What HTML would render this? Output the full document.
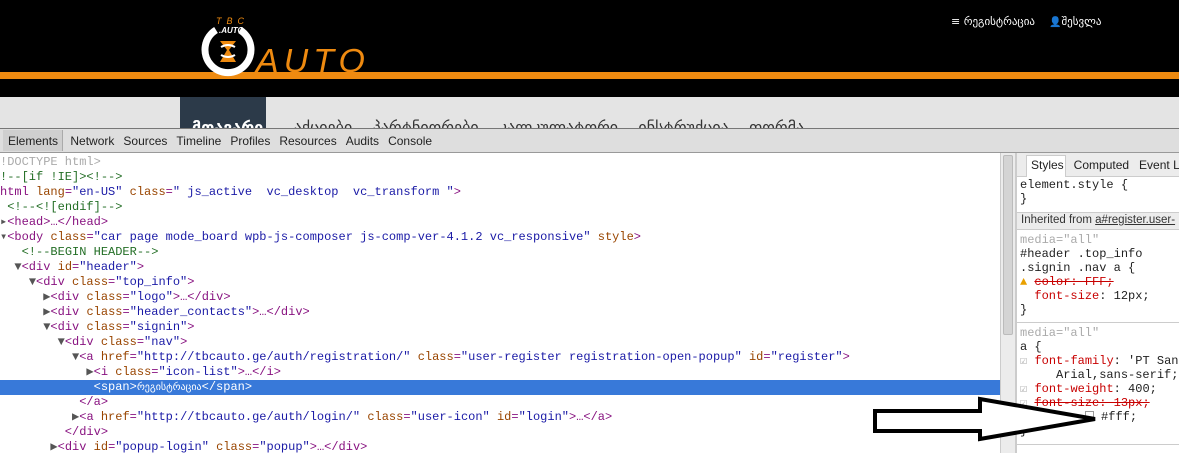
<!DOCTYPE html><html><head><meta charset="utf-8"><style>
*{margin:0;padding:0;box-sizing:border-box}
body{width:1179px;height:453px;overflow:hidden;background:#fff;position:relative;font-family:"Liberation Sans","DejaVu Sans",sans-serif}
.abs{position:absolute}
.code{font-family:"Liberation Mono","DejaVu Sans Mono",monospace;font-size:12px;white-space:pre;line-height:15px;color:#881280}
.at{color:#994500}.av{color:#1a1aa6}.cm{color:#236e25}.gr{color:#aaa}
.tb span{margin-right:9px}
</style></head><body>
<div class="abs" style="left:0;top:0;width:1179px;height:97px;background:#000"></div>
<div class="abs" style="left:0;top:72px;width:1179px;height:7px;background:#ee8a10"></div>
<svg class="abs" style="left:190px;top:0px" width="200" height="80">
<path d="M26 30 A23 23 0 1 0 50 30" fill="none" stroke="#fff" stroke-width="7"/>
<text x="29" y="33" fill="#fff" font-size="8" font-style="italic" font-weight="bold" font-family="Liberation Sans">.AUTO</text>
<text x="26" y="24" fill="#ee8a10" font-size="9" font-style="italic" font-family="Liberation Sans" letter-spacing="5">TBC</text>
<path d="M30 41 L46 41 L39 50 L46 62 L30 62 L37 50 Z" fill="#ee8a10"/>
<path d="M31 47 Q38 43 45 47 M31 55 Q38 59 45 55" stroke="#fff" stroke-width="2" fill="none"/>
<text x="66" y="72" fill="#ee8a10" font-size="33" font-style="italic" font-family="Liberation Sans" letter-spacing="5" textLength="114" lengthAdjust="spacingAndGlyphs">AUTO</text>
</svg>
<div class="abs" style="left:951px;top:15px;color:#fff;font-size:11px;font-family:'DejaVu Sans',sans-serif">≡ რეგისტრაცია &nbsp;&nbsp;&nbsp;<span style="font-size:10px">👤</span>შესვლა</div>
<div class="abs" style="left:0;top:97px;width:1179px;height:31px;background:#e4e4e4;overflow:hidden">
<div class="abs" style="left:180px;top:0;width:86px;height:31px;background:#2c3a49"></div>
<div class="abs" style="left:192px;top:21px;font-size:16px;white-space:nowrap;font-family:'DejaVu Sans',sans-serif;color:#333"><span style="color:#fff;font-weight:bold">მთავარი</span>&nbsp;&nbsp;&nbsp;&nbsp;&nbsp;&nbsp;აქციები&nbsp;&nbsp;&nbsp; პარტნიორები &nbsp;&nbsp;&nbsp;კალკულატორი &nbsp;&nbsp;&nbsp;ინსტრუქცია&nbsp;&nbsp;&nbsp; ფორმა</div>
</div>
<div class="abs" style="left:0;top:128px;width:1179px;height:25px;background:#dedede;border-top:1px solid #777;border-bottom:1px solid #999"></div>
<div class="abs tb" style="left:3px;top:130px;width:60px;height:21px;background:#cfcfcf;border-right:1px solid #aaa"></div>
<div class="abs tb" style="left:8px;top:134px;font-size:12px;color:#222;white-space:nowrap"><span>Elements</span> <span>Network</span><span>Sources</span><span>Timeline</span><span>Profiles</span><span>Resources</span><span>Audits</span><span>Console</span></div>
<div class="abs" style="left:0;top:380px;width:1000px;height:15px;background:#3879d9"></div>
<div class="abs code" style="left:0;top:155px"><span class="gr">!DOCTYPE html&gt;</span>
<span class="cm">!--[if !IE]&gt;&lt;!--&gt;</span>
html <span class="at">lang</span>=<span class="av">"en-US"</span> <span class="at">class</span>=<span class="av">" js_active  vc_desktop  vc_transform "</span>&gt;
 <span class="cm">&lt;!--&lt;![endif]--&gt;</span>
<span style="color:#555">▸</span>&lt;head&gt;…&lt;/head&gt;
<span style="color:#555">▾</span>&lt;body <span class="at">class</span>=<span class="av">"car page mode_board wpb-js-composer js-comp-ver-4.1.2 vc_responsive"</span> <span class="at">style</span>&gt;
   <span class="cm">&lt;!--BEGIN HEADER--&gt;</span>
  <span style="color:#555">▼</span>&lt;div <span class="at">id</span>=<span class="av">"header"</span>&gt;
    <span style="color:#555">▼</span>&lt;div <span class="at">class</span>=<span class="av">"top_info"</span>&gt;
      <span style="color:#555">▶</span>&lt;div <span class="at">class</span>=<span class="av">"logo"</span>&gt;…&lt;/div&gt;
      <span style="color:#555">▶</span>&lt;div <span class="at">class</span>=<span class="av">"header_contacts"</span>&gt;…&lt;/div&gt;
      <span style="color:#555">▼</span>&lt;div <span class="at">class</span>=<span class="av">"signin"</span>&gt;
        <span style="color:#555">▼</span>&lt;div <span class="at">class</span>=<span class="av">"nav"</span>&gt;
          <span style="color:#555">▼</span>&lt;a <span class="at">href</span>=<span class="av">"http://tbcauto.ge/auth/registration/"</span> <span class="at">class</span>=<span class="av">"user-register registration-open-popup"</span> <span class="at">id</span>=<span class="av">"register"</span>&gt;
            <span style="color:#555">▶</span>&lt;i <span class="at">class</span>=<span class="av">"icon-list"</span>&gt;…&lt;/i&gt;
             <span style="color:#fff">&lt;span&gt;<span style="font-family:'DejaVu Sans';font-size:10px">რეგისტრაცია</span>&lt;/span&gt;</span>
           &lt;/a&gt;
          <span style="color:#555">▶</span>&lt;a <span class="at">href</span>=<span class="av">"http://tbcauto.ge/auth/login/"</span> <span class="at">class</span>=<span class="av">"user-icon"</span> <span class="at">id</span>=<span class="av">"login"</span>&gt;…&lt;/a&gt;
         &lt;/div&gt;
       <span style="color:#555">▶</span>&lt;div <span class="at">id</span>=<span class="av">"popup-login"</span> <span class="at">class</span>=<span class="av">"popup"</span>&gt;…&lt;/div&gt;</div>
<div class="abs" style="left:1000px;top:153px;width:16px;height:300px;background:#ececec;border-left:1px solid #ccc;border-right:1px solid #ccc"></div>
<div class="abs" style="left:1003px;top:155px;width:10px;height:180px;background:#d4d4d4;border:1px solid #bbb;border-radius:2px"></div>
<div class="abs" style="left:1016px;top:153px;width:163px;height:300px;background:#fff;border-left:1px solid #ccc"></div>
<div class="abs" style="left:1017px;top:153px;width:162px;height:24px;background:#ececec;border-bottom:1px solid #ccc"></div>
<div class="abs" style="left:1026px;top:155px;width:40px;height:22px;background:#fff;border:1px solid #ccc;border-bottom:none"></div>
<div class="abs" style="left:1031px;top:158px;font-size:12px;white-space:nowrap;color:#222">Styles &nbsp;&nbsp;Computed &nbsp;&nbsp;Event Li</div>
<div class="abs" style="left:1017px;top:212px;width:162px;height:18px;background:#ececec;border-top:1px solid #ccc;border-bottom:1px solid #ccc"></div>
<div class="abs" style="left:1021px;top:214px;font-size:11.5px;white-space:nowrap;color:#333">Inherited from <u>a#register.user-</u></div>
<div class="abs" style="left:1017px;top:322px;width:162px;height:1px;background:#ccc"></div>
<div class="abs" style="left:1017px;top:444px;width:162px;height:1px;background:#ccc"></div>
<div class="abs code" style="left:1020px;top:178px;color:#222;line-height:14px">element.style {
}</div>
<div class="abs code" style="left:1020px;top:233px;color:#222;line-height:14px"><span class="gr">media="all"</span>
#header .top_info     <span class="gr">s</span>
.signin .nav a {
<span style="color:#e8a000">▲</span> <s style="color:#c80000">color: FFF;</s>
  <span style="color:#c80000">font-size</span>: 12px;
}</div>
<div class="abs code" style="left:1020px;top:326px;color:#222;line-height:14px"><span class="gr">media="all"</span>
a {
<span class="gr">☑</span> <span style="color:#c80000">font-family</span>: 'PT San
     Arial,sans-serif;
<span class="gr">☑</span> <span style="color:#c80000">font-weight</span>: 400;
<span class="gr">☑</span> <s style="color:#c80000">font-size: 13px;</s>
<span class="gr">☑</span> <span style="color:#c80000">color</span>: <span style="display:inline-block;width:9px;height:9px;border:1px solid #999"></span> #fff;
}</div>
<svg class="abs" style="left:0;top:0" width="1179" height="453">
<path d="M875 411 L980 411 L980 399 L1095 419 L980 439 L980 431 L875 431 Z" fill="#fff" stroke="#000" stroke-width="4" stroke-linejoin="miter"/>
</svg>
</body></html>
